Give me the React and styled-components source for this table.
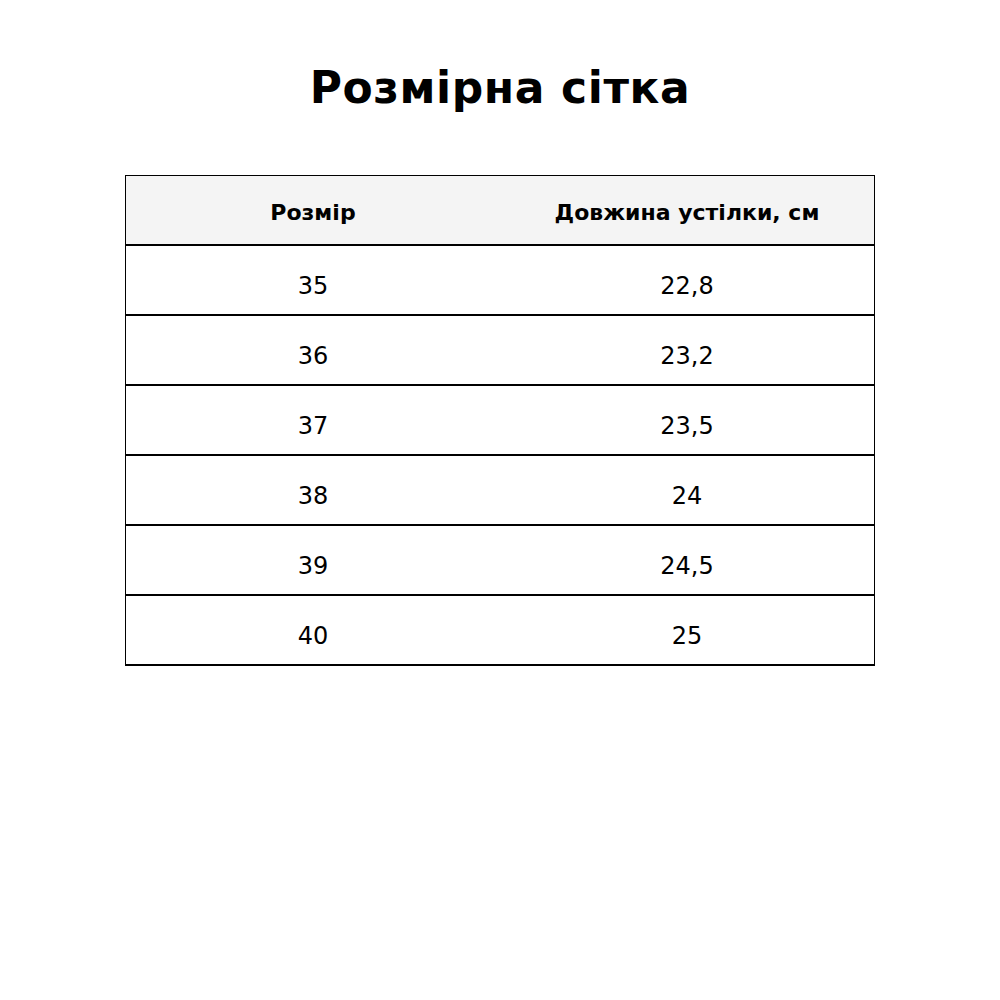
import React from "react";
import styled, { createGlobalStyle } from "styled-components";

const GlobalStyle = createGlobalStyle`
  html, body {
    margin: 0;
    padding: 0;
    background: #ffffff;
  }
  body {
    font-family: "DejaVu Sans", "Liberation Sans", sans-serif;
    color: #000;
  }
`;

const Page = styled.div`
  width: 1000px;
  height: 1000px;
  display: flex;
  flex-direction: column;
  align-items: center;
  padding-top: 62px;
  box-sizing: border-box;
`;

const Title = styled.h1`
  margin: 0;
  font-size: 44px;
  font-weight: bold;
  line-height: 52px;
  letter-spacing: 0.6px;
`;

const Table = styled.table`
  margin-top: 61px;
  width: 750px;
  border-collapse: collapse;
  border: 1.5px solid #000;
`;

const HeadRow = styled.tr`
  background: #f4f4f4;
`;

const Cell = styled.td`
  width: 50%;
  height: ${(p) => (p.$head ? "64px" : "56px")};
  padding: ${(p) => (p.$head ? "4px 0 0" : "12px 0 0")};
  text-align: center;
  font-size: ${(p) => (p.$head ? "22px" : "24px")};
  font-weight: ${(p) => (p.$head ? "bold" : "normal")};
  border-bottom: 2px solid #000;
  vertical-align: middle;
`;

const rows = [
  ["35", "22,8"],
  ["36", "23,2"],
  ["37", "23,5"],
  ["38", "24"],
  ["39", "24,5"],
  ["40", "25"],
];

const App = () => {
  return (
    <>
      <GlobalStyle />
      <Page>
        <Title>Розмірна сітка</Title>
        <Table>
          <thead>
            <HeadRow>
              <Cell as="th" $head>Розмір</Cell>
              <Cell as="th" $head>Довжина устілки, см</Cell>
            </HeadRow>
          </thead>
          <tbody>
            {rows.map(([size, len]) => (
              <tr key={size}>
                <Cell>{size}</Cell>
                <Cell>{len}</Cell>
              </tr>
            ))}
          </tbody>
        </Table>
      </Page>
    </>
  );
};

export default App;
